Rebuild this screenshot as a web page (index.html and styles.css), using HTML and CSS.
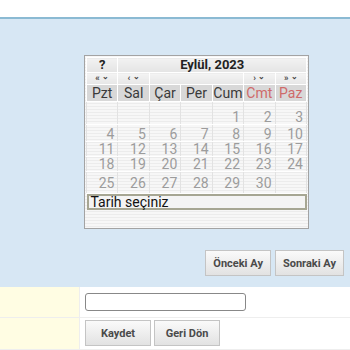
FILE: index.html
```html
<!DOCTYPE html>
<html lang="tr">
<head>
    <meta charset="UTF-8">
    <meta name="viewport" content="width=device-width, initial-scale=1.0">
    <title>Tarih Seçimi</title>
    <link rel="stylesheet" href="styles.css">
</head>
<body>
    <div class="topbar"></div>

    <div class="form">
        <div class="row row-picker">
            <div class="label"></div>
            <div class="value">
                <div class="calendar">
                    <table>
                        <tr class="title">
                            <td>?</td>
                            <td colspan="6">Eylül, 2023</td>
                        </tr>
                        <tr class="nav">
                            <td>« <span class="drop">⌄</span></td>
                            <td>‹ <span class="drop">⌄</span></td>
                            <td colspan="3"></td>
                            <td>› <span class="drop">⌄</span></td>
                            <td>» <span class="drop">⌄</span></td>
                        </tr>
                        <tr class="daynames">
                            <td>Pzt</td><td>Sal</td><td>Çar</td><td>Per</td><td>Cum</td>
                            <td class="weekend">Cmt</td><td class="weekend">Paz</td>
                        </tr>
                        <tr class="week w1">
                            <td></td><td></td><td></td><td></td><td>1</td><td>2</td><td>3</td>
                        </tr>
                        <tr class="week w2">
                            <td>4</td><td>5</td><td>6</td><td>7</td><td>8</td><td>9</td><td>10</td>
                        </tr>
                        <tr class="week w3">
                            <td>11</td><td>12</td><td>13</td><td>14</td><td>15</td><td>16</td><td>17</td>
                        </tr>
                        <tr class="week w4">
                            <td>18</td><td>19</td><td>20</td><td>21</td><td>22</td><td>23</td><td>24</td>
                        </tr>
                        <tr class="week w5">
                            <td>25</td><td>26</td><td>27</td><td>28</td><td>29</td><td>30</td><td></td>
                        </tr>
                        <tr class="footer">
                            <td colspan="7"><div class="status">Tarih seçiniz</div></td>
                        </tr>
                    </table>
                    <div class="calendar-bottom"></div>
                </div>

                <div class="month-buttons">
                    <button class="btn">Önceki Ay</button>
                    <button class="btn">Sonraki Ay</button>
                </div>
            </div>
        </div>

        <div class="row row-input">
            <div class="label"></div>
            <div class="value">
                <input type="text" class="date-input">
            </div>
        </div>

        <div class="row row-actions">
            <div class="label"></div>
            <div class="value">
                <button class="btn btn-fixed">Kaydet</button>
                <button class="btn btn-fixed">Geri Dön</button>
            </div>
        </div>
    </div>
</body>
</html>
```

FILE: styles.css
```css
body {
    font-family: Roboto, "Liberation Sans", sans-serif;
    margin: 0;
    background-color: #fff;
}
.topbar {
    height: 17px;
    border-bottom: 2px solid #8bbad3;
}
.row {
    display: grid;
    grid-template-columns: 80px 1fr;
}
.row-picker {
    background-color: #d7e7f4;
}
.row-picker .value {
    padding: 36px 6px 11px 4px;
}
.row-input,
.row-actions {
    border-bottom: 1px solid #eee;
}
.row-input .label,
.row-actions .label {
    background-color: #fffde3;
    border-right: 1px solid #eee;
}
.row-input .value {
    padding: 6px 5px 6px 5px;
}
.row-actions .value {
    padding: 2px 5px 3px 5px;
    display: flex;
    gap: 3px;
}

/* calendar */
.calendar {
    width: 221px;
    border: 1px solid #a3a3a3;
    padding: 1px;
    background: repeating-linear-gradient(#f7f7f7 0, #f7f7f7 2px, #ececec 2px, #ececec 3px);
}
.calendar table {
    width: 100%;
    border-collapse: collapse;
    table-layout: fixed;
}
.calendar td {
    padding: 0;
    border: 1px solid #fff;
}
.title td {
    height: 14px;
    line-height: 14px;
    font-size: 13px;
    font-weight: bold;
    text-align: center;
    color: #222;
    background: linear-gradient(#f2f2f2, #e4e4e4);
}
.nav td {
    height: 11px;
    line-height: 11px;
    font-size: 9px;
    font-weight: bold;
    text-align: center;
    color: #444;
    background: linear-gradient(#f4f4f4, #e6e6e6);
}
.nav .drop {
    font-size: 8px;
    position: relative;
    top: -2px;
}
.daynames td {
    height: 16px;
    line-height: 16px;
    font-size: 14px;
    text-align: center;
    color: #3a3a3a;
    background-color: #d8d8d8;
}
.daynames .weekend {
    color: #cf6a6a;
}
.week td {
    line-height: 14px;
    font-size: 14px;
    text-align: right;
    padding-right: 3px;
    color: #9c9c9c;
    vertical-align: bottom;
    border-color: #fff #e2e2e2;
}
.w1 td { height: 22px; }
.w2 td { height: 16px; }
.w3 td { height: 14px; }
.w4 td { height: 13px; }
.w5 td {
    height: 18px;
    padding-bottom: 3px;
}
.footer td {
    border: none;
}
.status {
    border: 2px solid #a6a693;
    font-size: 14px;
    color: #111;
    padding-left: 2px;
    height: 12px;
    line-height: 12px;
    background-color: #f4f4f4;
}
.calendar-bottom {
    height: 17px;
}

/* buttons */
.month-buttons {
    display: flex;
    justify-content: flex-end;
    gap: 4px;
    margin-top: 21px;
}
.btn {
    font-family: Roboto, "Liberation Sans", sans-serif;
    font-size: 11px;
    font-weight: bold;
    color: #4a4a4a;
    padding: 0 7px;
    height: 26px;
    border: 1px solid #c4c4c4;
    background: linear-gradient(#fafafa, #e2e2e2);
    cursor: pointer;
}
.btn-fixed {
    width: 66px;
    padding: 0;
}
.date-input {
    width: 155px;
    height: 14px;
    border: 1px solid #888;
    border-radius: 3px;
    padding: 1px 2px;
    display: block;
}
```
